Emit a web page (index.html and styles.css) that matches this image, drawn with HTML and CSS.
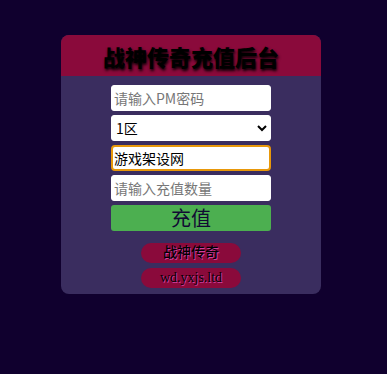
FILE: index.html
```html
<!DOCTYPE html>
<html lang="zh-CN">
<head>
<meta charset="UTF-8" />
<title>战神传奇充值后台</title>
<link rel="stylesheet" href="styles.css">
</head>
<body>

<div class="panel">
  <div class="panel-head">
    <h1>战神传奇充值后台</h1>
  </div>

  <form class="panel-body">
    <input class="field" type="password" placeholder="请输入PM密码" />
    <select class="field">
      <option>1区</option>
      <option>2区</option>
      <option>3区</option>
    </select>
    <input class="field active" type="text" value="游戏架设网" />
    <input class="field" type="text" placeholder="请输入充值数量" />
    <button class="submit" type="button">充值</button>

    <div class="links">
      <a class="pill" href="#">战神传奇</a>
      <a class="pill" href="#">wd.yxjs.ltd</a>
    </div>
  </form>
</div>

</body>
</html>
```

FILE: styles.css
```css
body {
  margin: 0;
  padding: 35px 5px 0 0;
  background: #10002e;
  font-family: "Noto Sans CJK SC", "Noto Sans", sans-serif;
}
.panel {
  width: 260px;
  margin: 0 auto;
  background: #3a2d5f;
  border-radius: 8px;
  overflow: hidden;
}
.panel-head {
  background: #8a0a3b;
  height: 41px;
  display: flex;
  align-items: center;
  justify-content: center;
}
.panel-head h1 {
  margin: 0;
  font-size: 22px;
  font-weight: 900;
  color: #000;
  text-shadow: 1px 2px 3px #000;
  line-height: 1;
}
.panel-body {
  display: flex;
  flex-direction: column;
  align-items: center;
  gap: 4px;
  padding: 9px 0 6px;
}
.field {
  width: 160px;
  height: 26px;
  box-sizing: border-box;
  border: 1px solid #fff;
  border-radius: 3px;
  background: #fff;
  padding: 0 2px;
  font-family: "Noto Sans CJK SC", sans-serif;
  font-size: 14px;
  color: #000;
  outline: none;
}
.field::placeholder {
  color: #777;
}
select.field {
  padding: 0;
}
.field.active {
  border: 2px solid #e8980a;
  border-radius: 4px;
  padding: 0 1px;
}
.submit {
  width: 160px;
  height: 26px;
  border: none;
  border-radius: 3px;
  background: #4caf50;
  color: #120a33;
  font-family: "Noto Sans CJK SC", sans-serif;
  font-size: 20px;
  line-height: 26px;
  padding: 0;
}
.links {
  display: flex;
  flex-direction: column;
  align-items: center;
  gap: 5px;
  margin-top: 8px;
}
.pill {
  display: block;
  width: 100px;
  height: 20px;
  line-height: 20px;
  border-radius: 10px;
  background: #8a0a3b;
  text-align: center;
  text-decoration: none;
  color: #000;
  font-family: "Liberation Serif", "Noto Sans CJK SC", serif;
  font-size: 14px;
  font-weight: 500;
  text-shadow: 1px 1px 0 #d040a0;
}
```
